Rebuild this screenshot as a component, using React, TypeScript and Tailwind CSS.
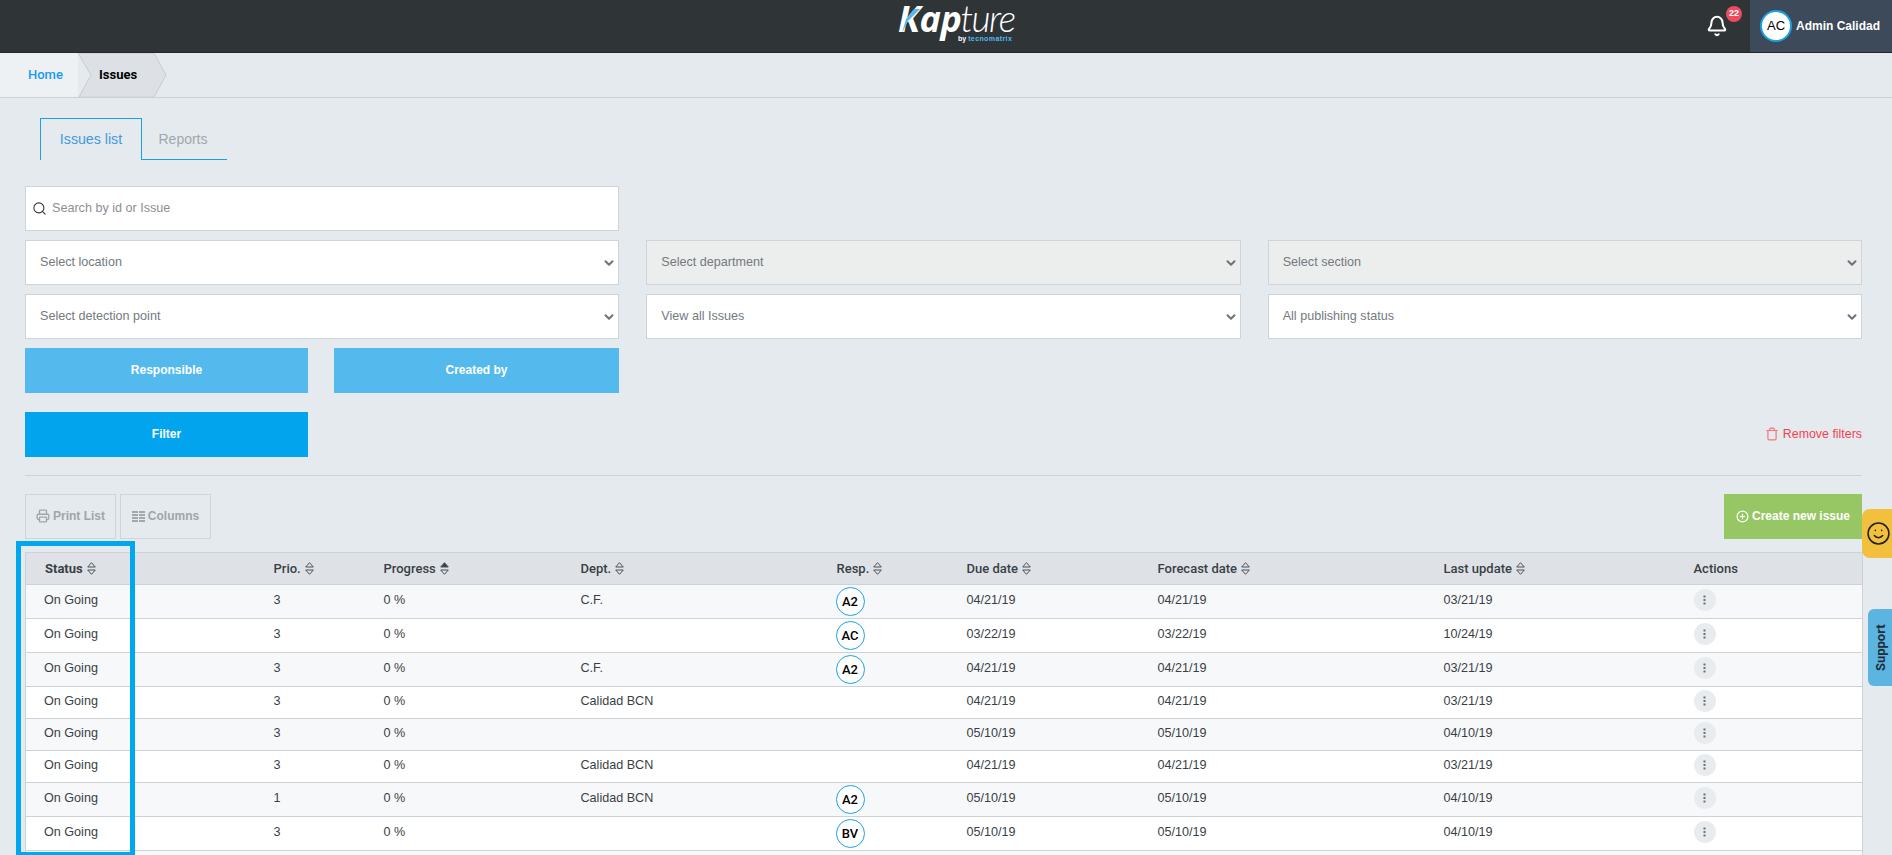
import { ChevronDown, Search, Trash, Printer, Bell, CirclePlus, Smile } from "lucide-react";

const selects1 = ["Select location", "Select department", "Select section"];
const selects2 = ["Select detection point", "View all Issues", "All publishing status"];

const rows = [
  { p: "3", d: "C.F.", r: "A2", due: "04/21/19", fc: "04/21/19", up: "03/21/19" },
  { p: "3", d: "", r: "AC", due: "03/22/19", fc: "03/22/19", up: "10/24/19" },
  { p: "3", d: "C.F.", r: "A2", due: "04/21/19", fc: "04/21/19", up: "03/21/19" },
  { p: "3", d: "Calidad BCN", r: "", due: "04/21/19", fc: "04/21/19", up: "03/21/19" },
  { p: "3", d: "", r: "", due: "05/10/19", fc: "05/10/19", up: "04/10/19" },
  { p: "3", d: "Calidad BCN", r: "", due: "04/21/19", fc: "04/21/19", up: "03/21/19" },
  { p: "1", d: "Calidad BCN", r: "A2", due: "05/10/19", fc: "05/10/19", up: "04/10/19" },
  { p: "3", d: "", r: "BV", due: "05/10/19", fc: "05/10/19", up: "04/10/19" },
];

function SortIcon({ active = false }: { active?: boolean }) {
  return (
    <svg width="9" height="13" viewBox="0 0 9 13" className="ml-1 inline-block align-[-2px]">
      <path d="M4.5 0.7 L8.3 5 H0.7 Z" fill={active ? "#3a3f45" : "none"} stroke="#4b5158" strokeWidth="1" />
      <path d="M0.7 8 H8.3 L4.5 12.3 Z" fill="none" stroke="#4b5158" strokeWidth="1" />
    </svg>
  );
}

function Select({ label, disabled }: { label: string; disabled?: boolean }) {
  return (
    <div className={`flex h-[45px] items-center justify-between border border-[#ced4da] pl-[14px] pr-[2px] text-[12.6px] text-[#737a80] ${disabled ? "bg-[#eceded]" : "bg-white"}`}>
      <span>{label}</span>
      <ChevronDown size={14} strokeWidth={3.5} className="text-[#6c757d]" />
    </div>
  );
}

function ColumnsIcon() {
  return (
    <svg width="13" height="11" viewBox="0 0 13 11" className="mr-[3px]" fill="#a3a8ad">
      <rect x="0" y="0" width="6" height="2" /><rect x="7" y="0" width="6" height="2" />
      <rect x="0" y="3" width="6" height="2" /><rect x="7" y="3" width="6" height="2" />
      <rect x="0" y="6" width="6" height="2" /><rect x="7" y="6" width="6" height="2" />
      <rect x="0" y="9" width="6" height="2" /><rect x="7" y="9" width="6" height="2" />
    </svg>
  );
}

function Logo() {
  return (
    <div className="relative ml-[22px] h-[36px] w-[114px] select-none text-white">
      <div className="absolute left-[-2px] top-[-8px] flex items-baseline whitespace-nowrap leading-[36px]">
        <span className="font-['Open_Sans'] text-[36px] font-bold italic tracking-[-0.5px]">Kap</span>
        <span className="-ml-[1px] font-['Lato'] text-[37px] font-light italic tracking-[-1.5px]">ture</span>
      </div>
      <svg width="20" height="24" viewBox="0 0 20 24" className="absolute left-[0px] top-[1px]">
        <path d="M14 0 L20 0 L8 12 L2 24 L6 10 Z" fill="#55b9ec" />
      </svg>
      <div className="absolute left-[58px] top-[27px] whitespace-nowrap font-['Liberation_Sans'] text-[7px] font-bold leading-[8px]">
        <span className="text-white">by </span>
        <span className="tracking-[0.4px] text-[#55b9ec]">tecnomatrix</span>
      </div>
    </div>
  );
}

const cell = "pl-[18px] pb-[3px]";

export default function App() {
  return (
    <div className="relative h-[855px] w-full overflow-hidden bg-[#e5eaee] font-['Liberation_Sans',sans-serif] text-[12.6px] text-[#3a3f45]">
      <header className="relative flex h-[53px] items-center justify-center border-b border-[#23272a] bg-[#2f3437]">
        <Logo />
        <div className="absolute right-0 top-0 flex h-[52px]">
          <div className="relative mr-[7px] flex w-[52px] items-center justify-center">
            <Bell size={22} strokeWidth={2.25} className="text-white" />
            <span className="absolute left-[35px] top-[6px] flex h-[16px] w-[16px] items-center justify-center rounded-full bg-[#ec4c60] text-[9px] font-bold text-white">22</span>
          </div>
          <div className="flex w-[142px] items-center bg-[#3c4a5a] pl-[10px]">
            <span className="flex h-[32px] w-[32px] items-center justify-center rounded-full border-2 border-[#1ba1e2] bg-white text-[13px] text-black">AC</span>
            <span className="ml-[4px] whitespace-nowrap text-[12px] font-bold text-white">Admin Calidad</span>
          </div>
        </div>
      </header>

      <nav className="flex h-[45px] border-b border-[#cdd2d6] font-['Roboto'] text-[13px]">
        <div className="relative flex h-[44px] w-[78px] items-center bg-[#eef1f4] pl-[28px] font-medium text-[#1a9bf0]">Home</div>
        <div className="relative flex h-[44px] items-center pl-[21px] font-bold text-black">
          <svg width="89" height="44" viewBox="0 0 89 44" className="absolute left-0 top-0" preserveAspectRatio="none">
            <path d="M0 0 H76 L88 22 L76 44 H1 L13 22 Z" fill="#dde0e4" stroke="#c8ccd0" />
          </svg>
          <span className="relative">Issues</span>
        </div>
      </nav>

      <div className="ml-[40px] mt-[20px] flex h-[42px] w-[187px]">
        <div className="flex h-[42px] w-[102px] items-center justify-center border border-b-0 border-[#1ba1e2] text-[14.2px] text-[#3f9ae0]">Issues list</div>
        <div className="flex h-[42px] flex-1 items-center justify-center border-b border-[#1ba1e2] pr-[3px] pt-[1px] text-[14px] text-[#a0a7ad]">Reports</div>
      </div>

      <main className="pl-[25px] pr-[30px]">
        <div className="mt-[26px] flex h-[45px] w-[594px] items-center border border-[#ced4da] bg-white pb-[1px] pl-[6px] text-[12.6px] text-[#8b9095]">
          <Search size={15} strokeWidth={1.75} className="mr-[5px] text-[#33383c]" />
          Search by id or Issue
        </div>

        <div className="mt-[9px] grid grid-cols-3 gap-x-[27px] gap-y-[9px]">
          {selects1.map((s, i) => <Select key={s} label={s} disabled={i > 0} />)}
          {selects2.map((s) => <Select key={s} label={s} />)}
        </div>

        <div className="mt-[9px] flex w-[594px] justify-between">
          <button className="h-[45px] w-[283px] bg-[#54baed] pb-[1px] text-[12px] font-bold text-white">Responsible</button>
          <button className="h-[45px] w-[285px] bg-[#54baed] pb-[1px] text-[12px] font-bold text-white">Created by</button>
        </div>

        <div className="mt-[19px] flex items-center justify-between">
          <button className="h-[45px] w-[283px] bg-[#03a4ee] pb-[1px] text-[12px] font-bold text-white">Filter</button>
          <span className="flex items-center text-[12.4px] text-[#f5414f]">
            <Trash size={14} strokeWidth={2} className="mr-[4px] text-[#f9707e]" />Remove filters
          </span>
        </div>

        <hr className="mt-[18px] border-t border-[#cdd2d6]" />

        <div className="mt-[18px] flex h-[45px] justify-between">
          <div className="flex gap-[4px]">
            <div className="flex w-[91px] items-center justify-center border border-[#ced4da] pb-[1px] text-[12px] font-bold text-[#a0a5aa]">
              <Printer size={14} strokeWidth={2.25} className="mr-[3px]" />Print List
            </div>
            <div className="flex w-[91px] items-center justify-center border border-[#ced4da] pb-[1px] text-[12px] font-bold text-[#a0a5aa]">
              <ColumnsIcon />Columns
            </div>
          </div>
          <div className="flex w-[138px] items-center justify-center bg-[#97c664] pb-[1px] text-[12px] font-bold text-white">
            <CirclePlus size={13} strokeWidth={2.25} className="mr-[3px]" />Create new issue
          </div>
        </div>

        <table className="mt-[13px] w-[1837px] table-fixed border-collapse border-x border-[#cdd2d6] text-left text-[12.6px] text-[#3a3f45]">
          <colgroup>
            <col className="w-[230px]" /><col className="w-[110px]" /><col className="w-[197px]" />
            <col className="w-[256px]" /><col className="w-[130px]" /><col className="w-[191px]" />
            <col className="w-[286px]" /><col className="w-[250px]" /><col className="w-[187px]" />
          </colgroup>
          <thead>
            <tr className="h-[32px] border-y border-[#cdd2d6] bg-[#dee2e6] font-['Roboto'] text-[13px]">
              {["Status", "Prio.", "Progress", "Dept.", "Resp.", "Due date", "Forecast date", "Last update"].map((h) => (
                <th key={h} className={`${h === "Status" ? "pl-[19px] font-bold" : "pl-[18px] font-medium"}`}>
                  {h}<SortIcon active={h === "Progress"} />
                </th>
              ))}
              <th className="pl-[18px] font-medium">Actions</th>
            </tr>
          </thead>
          <tbody>
            {rows.map((r, i) => (
              <tr key={i} className={`border-b border-[#cdd2d6] align-middle ${r.r ? "h-[34px]" : "h-[32px]"} ${i % 2 === 0 ? "bg-[#f7f8fa]" : "bg-white"}`}>
                <td className="pb-[3px] pl-[18px]">On Going</td>
                <td className={cell}>{r.p}</td>
                <td className={cell}>0 %</td>
                <td className={cell}>{r.d}</td>
                <td className="pl-[17px]">
                  {r.r && (
                    <span className="flex h-[29px] w-[29px] items-center justify-center rounded-full border border-[#1ba1e2] bg-white font-['Roboto'] text-[13px] font-medium text-black">{r.r}</span>
                  )}
                </td>
                <td className={cell}>{r.due}</td>
                <td className={cell}>{r.fc}</td>
                <td className={cell}>{r.up}</td>
                <td className="pb-[3px] pl-[18px]">
                  <span className="flex h-[22px] w-[22px] items-center justify-center rounded-full bg-[#e9ecef]">
                    <svg width="3" height="10" viewBox="0 0 3 10" fill="#6b7075"><rect x="0.5" y="0.5" width="2" height="2" /><rect x="0.5" y="4" width="2" height="2" /><rect x="0.5" y="7.5" width="2" height="2" /></svg>
                  </span>
                </td>
              </tr>
            ))}
            <tr className="h-[32px] bg-[#f7f8fa]"><td colSpan={9} /></tr>
          </tbody>
        </table>
      </main>

      <div className="pointer-events-none absolute left-[16px] top-[541px] h-[316px] w-[119px] border-[5px] border-[#00a7ec]" />

      <div className="absolute right-0 top-[509px] flex h-[49px] w-[30px] items-center rounded-l-[8px] bg-[#f3c03e] pl-[4px]">
        <Smile size={25} strokeWidth={1.5} className="text-[#222]" />
      </div>
      <div className="absolute right-0 top-[609px] flex h-[77px] w-[24px] items-center justify-center rounded-l-[6px] bg-[#5bb5e0]">
        <span className="-rotate-90 whitespace-nowrap font-['Roboto'] text-[13px] font-bold text-[#222d38]">Support</span>
      </div>
    </div>
  );
}
